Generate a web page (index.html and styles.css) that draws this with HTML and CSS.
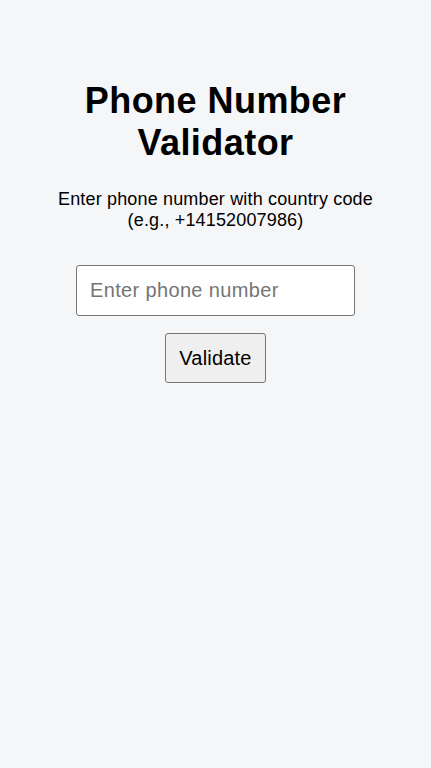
FILE: index.html
```html
<!DOCTYPE html>
<html lang="en">
<head>
<meta charset="utf-8">
<title>Phone Number Validator</title>
<link rel="stylesheet" href="styles.css">
</head>
<body>
<main class="app">
  <h1 class="title">Phone Number Validator</h1>
  <p class="hint">Enter phone number with country code (e.g., +14152007986)</p>
  <input class="phone-input" type="text" placeholder="Enter phone number">
  <button class="validate-btn" type="button">Validate</button>
</main>
</body>
</html>
```
FILE: styles.css
```css
html, body {
  margin: 0;
  padding: 0;
}
body {
  background: #f5f6f8;
  font-family: "Liberation Sans", Arial, sans-serif;
  color: #000;
}
.app {
  display: flex;
  flex-direction: column;
  align-items: center;
  text-align: center;
  padding: 80px 40px 0;
}
.title {
  margin: 0 0 25px;
  font-size: 36px;
  font-weight: bold;
  line-height: normal;
  letter-spacing: 0.45px;
  width: 320px;
}
.hint {
  margin: 0 0 34px;
  font-size: 18px;
  line-height: normal;
  letter-spacing: 0.16px;
}
.phone-input {
  box-sizing: border-box;
  width: 279px;
  height: 51px;
  padding: 0 13px;
  font-family: "Liberation Sans", Arial, sans-serif;
  font-size: 20px;
  letter-spacing: 0.35px;
  border: 1px solid #767676;
  border-radius: 3px;
  background: #fff;
  color: #000;
  margin: 0 0 17px;
}
.phone-input::placeholder {
  color: #757575;
}
.validate-btn {
  box-sizing: border-box;
  height: 50px;
  padding: 0 13px;
  font-family: "Liberation Sans", Arial, sans-serif;
  font-size: 20px;
  letter-spacing: 0.2px;
  background: #efefef;
  border: 1px solid #767676;
  border-radius: 3px;
  color: #000;
}
```
